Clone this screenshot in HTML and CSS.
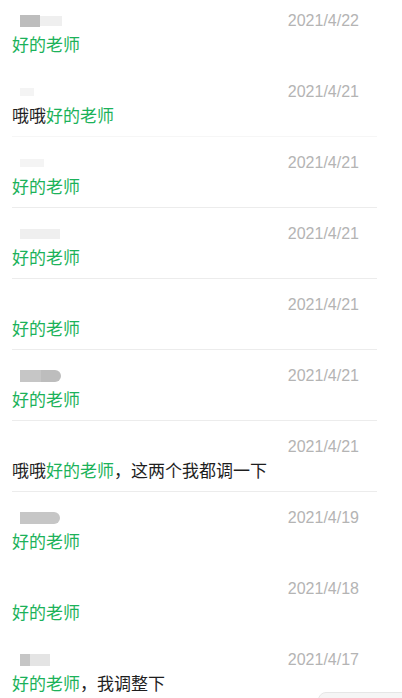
FILE: index.html
```html
<!DOCTYPE html>
<html lang="zh-CN">
<head>
    <meta charset="UTF-8">
    <meta name="viewport" content="width=device-width, initial-scale=1.0">
    <title>留言</title>
    <link rel="stylesheet" href="styles.css">
</head>
<body>
    <div class="list">
        <div class="item">
            <div class="head">
                <span class="name"><i class="blur dark" style="width:20px"></i><i class="blur pale" style="width:22px"></i></span>
                <span class="date">2021/4/22</span>
            </div>
            <div class="msg"><span class="green">好的老师</span></div>
        </div>
        <div class="item soft">
            <div class="head">
                <span class="name"><i class="blur faint" style="width:14px"></i></span>
                <span class="date">2021/4/21</span>
            </div>
            <div class="msg">哦哦<span class="green">好的老师</span></div>
        </div>
        <div class="item line">
            <div class="head">
                <span class="name"><i class="blur faint" style="width:24px"></i></span>
                <span class="date">2021/4/21</span>
            </div>
            <div class="msg"><span class="green">好的老师</span></div>
        </div>
        <div class="item line">
            <div class="head">
                <span class="name"><i class="blur pale" style="width:40px"></i></span>
                <span class="date">2021/4/21</span>
            </div>
            <div class="msg"><span class="green">好的老师</span></div>
        </div>
        <div class="item line">
            <div class="head">
                <span class="name"></span>
                <span class="date">2021/4/21</span>
            </div>
            <div class="msg"><span class="green">好的老师</span></div>
        </div>
        <div class="item line">
            <div class="head">
                <span class="name"><i class="blur mid" style="width:21px"></i><i class="blur dark round" style="width:20px"></i></span>
                <span class="date">2021/4/21</span>
            </div>
            <div class="msg"><span class="green">好的老师</span></div>
        </div>
        <div class="item line">
            <div class="head">
                <span class="name"></span>
                <span class="date">2021/4/21</span>
            </div>
            <div class="msg">哦哦<span class="green">好的老师</span>，这两个我都调一下</div>
        </div>
        <div class="item">
            <div class="head">
                <span class="name"><i class="blur mid" style="width:20px"></i><i class="blur mid round" style="width:20px"></i></span>
                <span class="date">2021/4/19</span>
            </div>
            <div class="msg"><span class="green">好的老师</span></div>
        </div>
        <div class="item">
            <div class="head">
                <span class="name"></span>
                <span class="date">2021/4/18</span>
            </div>
            <div class="msg"><span class="green">好的老师</span></div>
        </div>
        <div class="item">
            <div class="head">
                <span class="name"><i class="blur mid" style="width:10px"></i><i class="blur light" style="width:20px"></i></span>
                <span class="date">2021/4/17</span>
            </div>
            <div class="msg"><span class="green">好的老师</span>，我调整下</div>
        </div>
    </div>

    <div class="float-btn"></div>
</body>
</html>
```

FILE: styles.css
```css
html, body {
    height: 100%;
    overflow: hidden;
}
body {
    margin: 0;
    padding: 0;
    background-color: #ffffff;
    font-family: "Liberation Sans", "Noto Sans CJK SC", sans-serif;
}
.list {
    margin-top: -5px;
    padding-left: 12px;
}
.item {
    width: 365px;
    height: 71px;
    box-sizing: border-box;
    padding-top: 14px;
    border-bottom: 1px solid transparent;
}
.item.line {
    border-bottom-color: #ececec;
}
.item.soft {
    border-bottom-color: #f6f6f6;
}
.head {
    display: flex;
    justify-content: space-between;
    align-items: center;
    height: 24px;
}
.name {
    display: flex;
    align-items: center;
    padding-left: 8px;
    height: 14px;
}
.blur {
    display: block;
    height: 12px;
    filter: blur(0.6px);
}
.blur.dark {
    background-color: #bdbdbd;
}
.blur.mid {
    background-color: #c6c6c6;
}
.blur.light {
    background-color: #e4e4e4;
}
.blur.pale {
    background-color: #efefef;
    height: 10px;
}
.blur.faint {
    background-color: #f4f4f4;
    height: 8px;
}
.blur.round {
    border-radius: 0 6px 6px 0;
}
.date {
    margin-right: 18px;
    font-size: 16px;
    color: #b4b4b4;
}
.msg {
    height: 22px;
    line-height: 22px;
    font-family: "Noto Sans CJK SC", sans-serif;
    font-size: 17px;
    color: #1e1e1e;
}
.green {
    color: #1cb25a;
}
.float-btn {
    position: fixed;
    left: 318px;
    bottom: -36px;
    width: 100px;
    height: 40px;
    border-radius: 8px;
    background-color: #f5f5f5;
    border: 1px solid #e6e6e6;
}
```
